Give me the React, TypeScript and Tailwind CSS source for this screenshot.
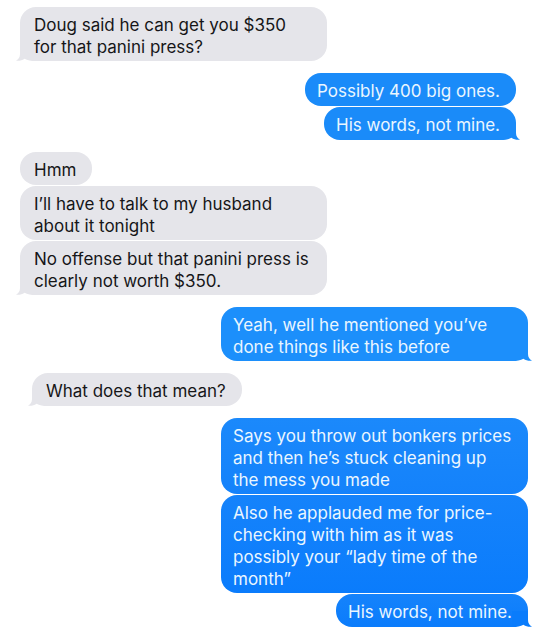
type Tone = "gray" | "sky" | "azure" | "blue" | "deep";

interface Message {
  text: string;
  tone: Tone;
}

interface Group {
  sent: boolean;
  inset: boolean;
  messages: Message[];
}

const fills: Record<Tone, string> = {
  gray: "bg-[#e5e5ea] text-[#161618]",
  sky: "bg-[#1a8bf9] text-[#eaf6ff]",
  azure: "bg-[#1c8ffb] text-[#eaf6ff]",
  blue: "bg-linear-to-b from-[#1b89fb] to-[#1482fb] text-[#eaf6ff]",
  deep: "bg-linear-to-b from-[#1583fb] to-[#0a7cfc] text-[#eaf6ff]",
};

const tails: Record<Tone, string> = {
  gray: "text-[#e5e5ea]",
  sky: "text-[#1a8bf9]",
  azure: "text-[#1c8ffb]",
  blue: "text-[#1482fb]",
  deep: "text-[#0a7cfc]",
};

const conversation: Group[] = [
  {
    sent: false,
    inset: false,
    messages: [{ text: "Doug said he can get you $350 for that panini press?", tone: "gray" }],
  },
  {
    sent: true,
    inset: true,
    messages: [
      { text: "Possibly 400 big ones.", tone: "sky" },
      { text: "His words, not mine.", tone: "sky" },
    ],
  },
  {
    sent: false,
    inset: false,
    messages: [
      { text: "Hmm", tone: "gray" },
      { text: "I’ll have to talk to my husband about it tonight", tone: "gray" },
      { text: "No offense but that panini press is clearly not worth $350.", tone: "gray" },
    ],
  },
  {
    sent: true,
    inset: false,
    messages: [{ text: "Yeah, well he mentioned you’ve done things like this before", tone: "azure" }],
  },
  {
    sent: false,
    inset: true,
    messages: [{ text: "What does that mean?", tone: "gray" }],
  },
  {
    sent: true,
    inset: false,
    messages: [
      { text: "Says you throw out bonkers prices and then he’s stuck cleaning up the mess you made", tone: "blue" },
      {
        text: "Also he applauded me for price-checking with him as it was possibly your “lady time of the month”",
        tone: "deep",
      },
      { text: "His words, not mine.", tone: "deep" },
    ],
  },
];

function Tail({ sent, tone }: { sent: boolean; tone: Tone }) {
  return (
    <svg
      aria-hidden="true"
      viewBox="0 0 20 16"
      className={`absolute bottom-0 h-4 w-5 ${sent ? "-right-1" : "-left-1 -scale-x-100"} ${tails[tone]}`}
    >
      <path
        fill="currentColor"
        d="M16 0V9C16 12 17.5 14.500 20 15.700C17 16.200 14 15.500 11.500 13.700C8.500 15.500 5 16 0 16V0Z"
      />
    </svg>
  );
}

function Bubble({ message, sent, last }: { message: Message; sent: boolean; last: boolean }) {
  return (
    <li
      className={`relative min-h-[33px] max-w-[307px] rounded-2xl pt-[7px] pr-4 pb-[3px] ${
        sent ? "pl-3" : "pl-3.5"
      } ${fills[message.tone]}`}
    >
      {last && <Tail sent={sent} tone={message.tone} />}
      <p className="relative">{message.text}</p>
    </li>
  );
}

export default function App() {
  return (
    <main className="flex flex-col gap-3 bg-white pt-[7px] font-['Inter','Liberation_Sans',sans-serif] text-[17px] leading-[22px]">
      {conversation.map((group, i) => (
        <ul
          key={i}
          className={`flex flex-col gap-px ${group.sent ? "items-end" : "items-start"} ${
            group.sent ? (group.inset ? "pr-6" : "pr-3") : group.inset ? "pl-8" : "pl-5"
          }`}
        >
          {group.messages.map((message, j) => (
            <Bubble key={j} message={message} sent={group.sent} last={j === group.messages.length - 1} />
          ))}
        </ul>
      ))}
    </main>
  );
}
